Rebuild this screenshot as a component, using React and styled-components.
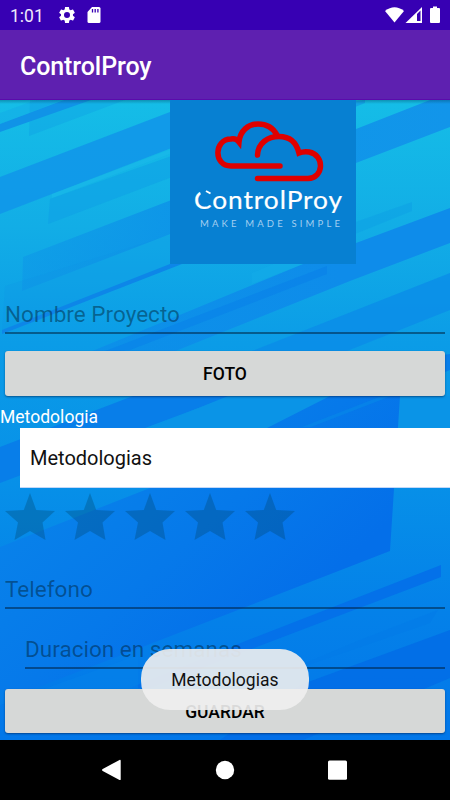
import React from "react";
import styled, { createGlobalStyle } from "styled-components";

const Global = createGlobalStyle`
  * { box-sizing: border-box; }
  body { margin: 0; font-family: Roboto, "Liberation Sans", sans-serif; }
`;

const Phone = styled.div`
  position: relative;
  width: 450px;
  height: 800px;
  display: flex;
  flex-direction: column;
  overflow: hidden;
  background: #000;
`;

const StatusBar = styled.header`
  height: 30px;
  display: flex;
  align-items: center;
  padding: 0 9px 0 10px;
  background: #3700b3;
  color: #fff;
`;

const Clock = styled.span`
  width: 47px;
  font-size: 17.5px;
  line-height: 30px;
  color: #eee9fb;
  padding-top: 1px;
`;

const StatusIcons = styled.div`
  display: flex;
  gap: 10px;
  flex: 1;
  svg { display: block; }
`;

const AppBar = styled.div`
  height: 70px;
  display: flex;
  align-items: center;
  padding: 4px 20px 0;
  background: #5e20b0;
  border-bottom: 1px solid #5b0bab;
  color: #fff;
  font-size: 25px;
  font-weight: 500;
  letter-spacing: -0.1px;
  flex: none;
`;

const Screen = styled.main`
  position: relative;
  height: 640px;
  flex: none;
  display: flex;
  flex-direction: column;
  isolation: isolate;
`;

const Backdrop = styled.svg`
  position: absolute;
  inset: 0;
  z-index: -1;
`;

const LogoPanel = styled.div`
  width: 186px;
  height: 164px;
  margin-left: 170px;
  background: #0780d2;
  flex: none;
  svg { display: block; }
`;

const Field = styled.label`
  height: 40px;
  margin: ${(p) => p.$top}px 5px 0 ${(p) => p.$left}px;
  display: flex;
  align-items: flex-end;
  padding-bottom: 4px;
  border-bottom: 2px solid rgba(0, 25, 50, 0.5);
  color: rgba(0, 30, 50, 0.47);
  font-size: 22.5px;
  line-height: 28px;
  letter-spacing: 0.02px;
  flex: none;
`;

const Button = styled.button`
  height: ${(p) => p.$height}px;
  margin: ${(p) => p.$top}px 5px 0;
  padding: 1px 0 0;
  border: 0;
  border-radius: 3px;
  background: #d6d8d7;
  box-shadow: 0 1px 2px rgba(0, 20, 60, 0.5);
  color: #000;
  font: 500 17.5px Roboto, sans-serif;
  flex: none;
`;

const Caption = styled.div`
  height: 32px;
  padding-top: 10px;
  color: #fff;
  font-size: 17.5px;
  line-height: 22px;
  letter-spacing: 0.03px;
  flex: none;
`;

const Spinner = styled.div`
  height: 60px;
  margin-left: 20px;
  padding-left: 10px;
  background: #fff;
  border-bottom: 1px solid #c3d8f8;
  color: #111;
  font-size: 20px;
  line-height: 61px;
  flex: none;
`;

const Rating = styled.div`
  height: 60px;
  display: flex;
  flex: none;
  svg { display: block; fill: rgba(0, 70, 110, 0.33); }
`;

const Toast = styled.div`
  position: absolute;
  left: 141px;
  top: 649px;
  width: 168px;
  height: 61px;
  border-radius: 29px;
  background: rgba(238, 238, 238, 0.91);
  color: #111;
  font-size: 17.5px;
  line-height: 62px;
  letter-spacing: 0.05px;
  text-align: center;
`;

const NavBar = styled.nav`
  height: 60px;
  flex: none;
  background: #000;
  display: grid;
  grid-template-columns: repeat(3, 20px);
  column-gap: 92.5px;
  justify-content: center;
  align-items: center;
  svg { display: block; overflow: visible; }
`;

const BackdropArt = () => (
  <Backdrop width="450" height="640" viewBox="0 100 450 640" preserveAspectRatio="none">
    <defs>
      <linearGradient id="sea" x1="0" y1="0" x2="0" y2="1">
        <stop offset="0" stopColor="#15bde7" />
        <stop offset=".2" stopColor="#12ade6" />
        <stop offset=".38" stopColor="#0b9ce7" />
        <stop offset=".6" stopColor="#0790e8" />
        <stop offset=".8" stopColor="#0481e9" />
        <stop offset="1" stopColor="#0277e9" />
      </linearGradient>
      <linearGradient id="ray" gradientUnits="userSpaceOnUse" x1="20" y1="0" x2="450" y2="0">
        <stop offset="0" stopColor="#0d92e8" stopOpacity=".45" />
        <stop offset=".35" stopColor="#0d92e8" stopOpacity=".85" />
        <stop offset="1" stopColor="#1295ea" />
      </linearGradient>
      <linearGradient id="deep" gradientUnits="userSpaceOnUse" x1="120" y1="440" x2="280" y2="620">
        <stop offset="0" stopColor="#0881ea" />
        <stop offset=".5" stopColor="#0679ea" />
        <stop offset="1" stopColor="#046fe9" />
      </linearGradient>
      <linearGradient id="fade" gradientUnits="userSpaceOnUse" x1="90" y1="350" x2="340" y2="270">
        <stop offset="0" stopColor="#0c8aea" stopOpacity=".65" />
        <stop offset="1" stopColor="#0e8cea" />
      </linearGradient>
      <linearGradient id="shade" x1="0" y1="0" x2="0" y2="1">
        <stop offset="0" stopColor="#045" stopOpacity=".35" />
        <stop offset="1" stopColor="#045" stopOpacity="0" />
      </linearGradient>
    </defs>
    <path fill="url(#sea)" d="M0 100h450v640H0z" />
    <path fill="#1197e6" opacity=".22" d="M0 113 36 100H62L0 124z" />
    <path fill="#0d8fe2" opacity=".25" d="M30 100h95L29 136z" />
    <path fill="#1093e7" d="M0 124 64 100h27L0 132z" />
    <path fill="#1197e9" opacity=".9" d="M0 177 204 99h95L0 214z" />
    <path fill="#0d9ee5" opacity=".5" d="M50 199 180 153V174L48 224z" />
    <path fill="#1bb9ea" opacity=".6" d="M52 194 180 146v4L52 198z" />
    <path fill="url(#ray)" d="M23 257 356 129 430 100h20v27L22 291z" />
    <path fill="#1197e6" opacity=".7" d="M350 102l15-2v3l-15 6z" />
    <path fill="#0d9ee5" opacity=".45" d="M350 224 412 202v9l-62 25z" />
    <path fill="#1092e8" opacity=".2" d="M5 286 170 235v30L2 330z" />
    <path fill="#0d86e8" d="M2 330 170 264h12L2 334z" />
    <path fill="url(#fade)" d="M90 352 303 264 356 243 450 208v35L350 281 173 352z" />
    <path fill="#16ade9" opacity=".38" d="M252 273 303 252v12l-51 20z" />
    <path fill="#087be8" opacity=".4" d="M100 353 327 266v8L130 350z" />
    <path fill="#0b8be8" opacity=".75" d="M252 351 450 273v37L347 351z" />
    <path fill="#087ee9" d="M0 447 133 396 450 354v16L380 397H228L145 428 0 483z" />
    <path fill="#0a94e7" d="M228 396h222v44H120z" />
    <path fill="url(#deep)" d="M330 396h70l-10 155L225 615 0 702V547l150-59 117-60z" />
    <path fill="#078be8" opacity=".55" d="M382 396h9l-80 31h-9z" />
    <path fill="#0471e9" d="M441 565v12L275 640 150 688h-20l118-48z" />
    <path fill="#037ae8" opacity=".55" d="m438 610-78 30-90 38 160-55z" />
    <path fill="#036be6" opacity=".8" d="M450 630v48L303 740H220l80-55z" />
    <path fill="#0582e9" opacity=".55" d="m0 705 138-50v35H0z" />
    <path fill="url(#shade)" d="M0 100h450v4H0z" />
  </Backdrop>
);

const Logo = () => (
  <svg width="186" height="164" viewBox="170 100 186 164">
    <g fill="none" stroke="#df0000" strokeWidth="5.500" strokeLinecap="round">
      <path d="M280 166H231C213 166 214 139 231 139Q236 138 239 142C240 131 248 124 258 124Q271 124 277 135" />
      <path d="M257.500 155C258 143 268 136.500 279 136.500Q295 136.500 299 153Q304 151 309 152C325 155 324 178 308 178.500H257.500" />
    </g>
    <text x="194" y="209" textLength="149" lengthAdjust="spacingAndGlyphs" letterSpacing=".9" fill="#fff" stroke="#fff" strokeWidth=".2" fontFamily="Lato, sans-serif" fontSize="25">ControlProy</text>
    <path fill="#0780d2" d="M198 187h14v10h-10z" />
    <path stroke="#fff" strokeWidth="2" d="m206 191 4.500 2.500" />
    <text x="200" y="227" textLength="140" lengthAdjust="spacing" fill="#a5cff0" fontFamily="Lato, sans-serif" fontSize="9.500">MAKE MADE SIMPLE</text>
  </svg>
);

const Star = () => (
  <svg width="60" height="60" viewBox="0 0 60 60">
    <path d="M30 5 36.200 22 55 23 42.500 34.500 45.500 52 30 43 14.500 52 18 34.500 5 23 23.800 22z" />
  </svg>
);

export default function App() {
  return (
    <Phone>
      <Global />
      <StatusBar>
        <Clock>1:01</Clock>
        <StatusIcons>
          <svg width="20" height="20" viewBox="0 0 24 24" fill="#fff">
            <path d="M19.140 12.940c.04-.3.060-.61.060-.94s-.02-.64-.07-.94l2.030-1.580c.18-.14.230-.41.120-.61l-1.920-3.320c-.12-.22-.37-.29-.59-.22l-2.390.960c-.5-.38-1.030-.7-1.620-.94L14.400 2.810c-.04-.24-.24-.41-.48-.41h-3.840c-.24 0-.43.170-.47.410L9.250 5.350c-.59.240-1.130.570-1.620.940L5.240 5.330c-.22-.08-.47 0-.59.220L2.740 8.870c-.12.210-.08.470.120.610l2.030 1.580c-.05.300-.09.630-.09.940s.02.640.07.940l-2.030 1.580c-.18.140-.23.410-.12.610l1.920 3.320c.12.220.37.290.59.220l2.390-.96c.5.380 1.030.7 1.620.940l.36 2.540c.05.240.24.410.48.410h3.840c.24 0 .44-.17.470-.41l.36-2.540c.59-.24 1.130-.56 1.620-.94l2.390.960c.22.080.47 0 .59-.22l1.920-3.320c.12-.22.070-.47-.12-.61l-2.010-1.580zM12 15.600A3.600 3.600 0 1 1 12 8.400a3.600 3.600 0 0 1 0 7.200z" />
          </svg>
          <svg width="14" height="20" viewBox="0 0 14 20">
            <path fill="#fff" d="M5 2h7q1.500 0 1.500 1.500v13q0 1.500-1.500 1.500H2Q.5 18 .5 16.500V7z" />
            <path stroke="#3700b3" strokeWidth="1.300" d="M5.500 4v3.500M8.200 4v3.500M10.900 4v3.500" />
          </svg>
        </StatusIcons>
        <svg width="56" height="20" viewBox="0 0 56 20" fill="#fff">
          <path d="M0 6Q9.500-1.500 19 6L9.500 17.500z" />
          <path d="M37 2v16H20.500z" />
          <path fill="#3700b3" d="M32 9l3.500-3.500V16H32z" />
          <path d="M48 1.500h4V3h2q1 0 1 1v13q0 1-1 1h-8q-1 0-1-1V4q0-1 1-1h2z" />
        </svg>
      </StatusBar>
      <AppBar>ControlProy</AppBar>
      <Screen>
        <BackdropArt />
        <LogoPanel><Logo /></LogoPanel>
        <Field $top={30} $left={5}>Nombre Proyecto</Field>
        <Button $height={45} $top={17}>FOTO</Button>
        <Caption>Metodologia</Caption>
        <Spinner>Metodologias</Spinner>
        <Rating>{[0, 1, 2, 3, 4].map((i) => <Star key={i} />)}</Rating>
        <Field $top={21} $left={5}>Telefono</Field>
        <Field $top={20} $left={25}>Duracion en semanas</Field>
        <Button $height={44} $top={20}>GUARDAR</Button>
      </Screen>
      <NavBar>
        <svg width="20" height="20" viewBox="0 0 20 20"><path fill="#fff" d="M-.3 9.100 16.500-.1Q17.700-.5 17.700.8v18.400q0 1.300-1.200.7L-.3 10.900q-1.400-.9 0-1.800z" /></svg>
        <svg width="20" height="20" viewBox="0 0 20 20"><circle cx="10" cy="10" r="9.200" fill="#fff" /></svg>
        <svg width="20" height="20" viewBox="0 0 20 20"><rect x="0" y=".4" width="19" height="19.400" rx="1.500" fill="#fff" /></svg>
      </NavBar>
      <Toast>Metodologias</Toast>
    </Phone>
  );
}
